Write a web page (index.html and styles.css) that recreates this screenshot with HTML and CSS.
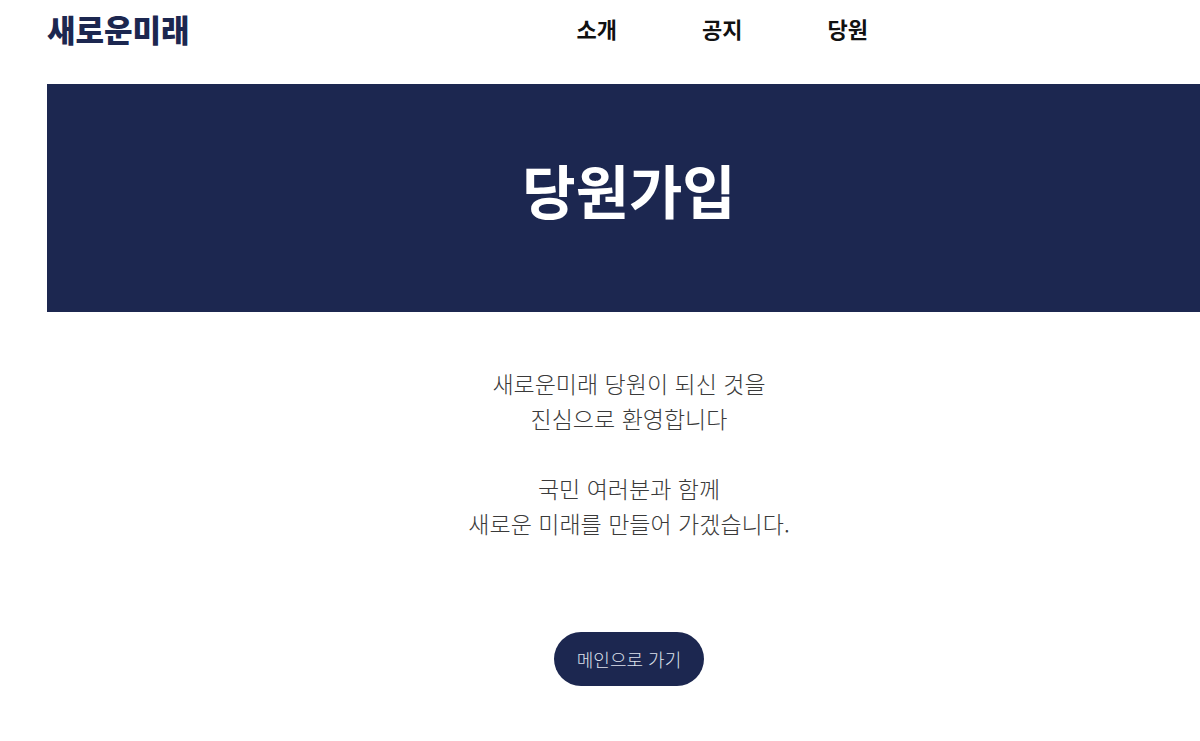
FILE: index.html
```html
<!DOCTYPE html>
<html lang="ko">
<head>
<meta charset="utf-8" />
<title>새로운미래 - 당원가입</title>
<link rel="stylesheet" href="styles.css">
</head>
<body>
<div class="page">
	<div class="header">
		<div class="logo">새로운미래</div>
		<ul class="nav">
			<li>소개</li>
			<li>공지</li>
			<li>당원</li>
		</ul>
	</div>

	<div class="banner">
		<h1>당원가입</h1>
	</div>

	<div class="welcome">
		<p>
			새로운미래 당원이 되신 것을<br />
			진심으로 환영합니다<br />
			<br />
			국민 여러분과 함께<br />
			새로운 미래를 만들어 가겠습니다.
		</p>
		<a class="button" href="#">메인으로 가기</a>
	</div>
</div>
</body>
</html>
```

FILE: styles.css
```css
html, body {
	margin: 0;
	padding: 0;
	overflow-x: hidden;
	background-color: #FFF;
}

body {
	font-family: "Noto Sans CJK KR", "Noto Sans", sans-serif;
	color: #111;
}

.page {
	width: 1164px;
	margin-left: 47px;
}

.header {
	display: flex;
	align-items: flex-start;
	box-sizing: border-box;
	height: 84px;
	padding-top: 13px;
}

.logo {
	font-size: 31px;
	line-height: 31px;
	font-weight: 900;
	color: #1C2750;
}

.nav {
	display: flex;
	gap: 85px;
	margin: 4px 0 0 387px;
	padding: 0;
	list-style: none;
}

.nav li {
	font-size: 22px;
	line-height: 22px;
	font-weight: 700;
	cursor: pointer;
}

.banner {
	display: flex;
	align-items: center;
	justify-content: center;
	height: 228px;
	background-color: #1C2750;
}

.banner h1 {
	margin: 0 0 18px 0;
	font-size: 58px;
	font-weight: 700;
	color: #FFF;
}

.welcome {
	display: flex;
	flex-direction: column;
	align-items: center;
	padding-top: 54px;
}

.welcome p {
	margin: 0;
	font-size: 23px;
	font-weight: 300;
	line-height: 35px;
	text-align: center;
	color: #3A3A3A;
}

.button {
	display: inline-block;
	margin-top: 91px;
	padding: 0 23px;
	height: 54px;
	line-height: 54px;
	border-radius: 27px;
	font-size: 18px;
	font-weight: 300;
	color: #DDE1EC;
	background-color: #1C2750;
	text-decoration: none;
}
```
